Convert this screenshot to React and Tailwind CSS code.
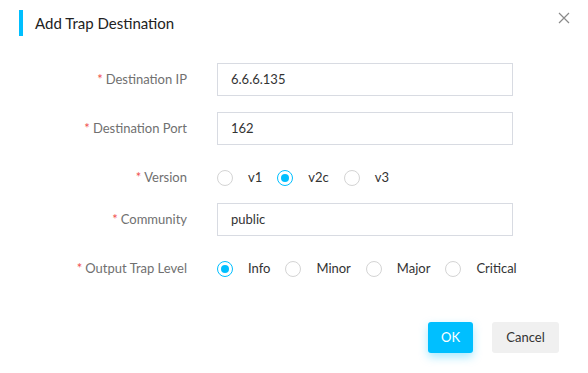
import React from "react";

const font = { fontFamily: "Lato, 'Noto Sans', sans-serif" };

function Label({ children }) {
  return (
    <div className="w-[187px] shrink-0 text-right text-[13px] text-[#707070]">
      <span className="text-[#f0524f] mr-[3px]">*</span>
      {children}
    </div>
  );
}

function Input({ value }) {
  return (
    <div className="ml-[30px] w-[296px] h-[33px] border border-[#d8dbe2] flex items-center pl-[13px] text-[13px] text-[#333]">
      {value}
    </div>
  );
}

function Radio({ label, checked }) {
  return (
    <div className="flex items-center mr-[15px]">
      <span
        className={
          "w-[16px] h-[16px] rounded-full border flex items-center justify-center bg-white " +
          (checked ? "border-[#00bfff]" : "border-[#d4d4d4]")
        }
      >
        {checked && <span className="w-[8px] h-[8px] rounded-full bg-[#00bfff]" />}
      </span>
      <span className="ml-[15px] text-[13px] text-[#333]">{label}</span>
    </div>
  );
}

export default function App() {
  return (
    <div className="w-[588px] h-[373px] bg-white relative overflow-hidden" style={font}>
      <div className="flex items-center pt-[10px] pl-[19px]">
        <div className="w-[4px] h-[26px] bg-[#00bfff]" />
        <div className="ml-[12px] text-[15px] text-[#222]">Add Trap Destination</div>
      </div>
      <button className="absolute top-[12px] right-[18px] text-[#888]">
        <svg width="12" height="12" viewBox="0 0 12 12">
          <path d="M1 1L11 11M11 1L1 11" stroke="#8a8a8a" strokeWidth="1.2" />
        </svg>
      </button>

      <div className="mt-[27px] flex flex-col">
        <div className="flex items-center">
          <Label>Destination IP</Label>
          <Input value="6.6.6.135" />
        </div>
        <div className="flex items-center mt-[16px]">
          <Label>Destination Port</Label>
          <Input value="162" />
        </div>
        <div className="flex items-center mt-[16px] h-[33px]">
          <Label>Version</Label>
          <div className="ml-[30px] flex items-center">
            <Radio label="v1" />
            <Radio label="v2c" checked />
            <Radio label="v3" />
          </div>
        </div>
        <div className="flex items-center mt-[9px]">
          <Label>Community</Label>
          <Input value="public" />
        </div>
        <div className="flex items-center mt-[16px] h-[33px]">
          <Label>Output Trap Level</Label>
          <div className="ml-[30px] flex items-center">
            <Radio label="Info" checked />
            <Radio label="Minor" />
            <Radio label="Major" />
            <Radio label="Critical" />
          </div>
        </div>
      </div>

      <div className="flex justify-end mt-[37px] pr-[29px] gap-[19px]">
        <button className="w-[45px] h-[31px] rounded-[3px] bg-[#00bfff] text-white text-[13px] shadow-[0_4px_10px_rgba(0,191,255,0.35)]">
          OK
        </button>
        <button className="w-[67px] h-[31px] rounded-[3px] bg-[#f0f0f0] text-[#333] text-[13px]">
          Cancel
        </button>
      </div>
    </div>
  );
}
